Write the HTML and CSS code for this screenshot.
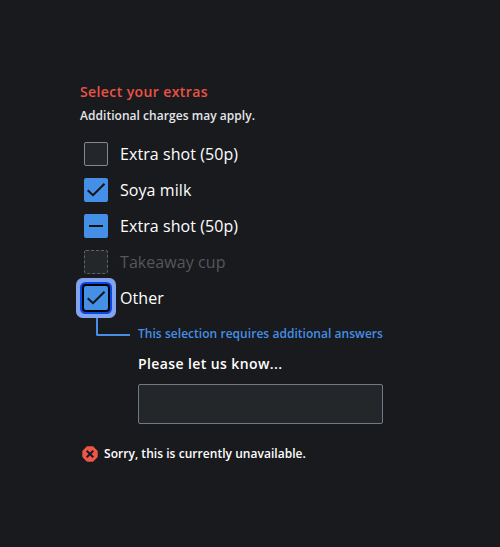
FILE: index.html
```html
<!DOCTYPE html>
<html lang="en">
<head>
<meta charset="utf-8">
<title>Select your extras</title>
<link rel="stylesheet" href="styles.css">
</head>
<body>
<main class="group">
  <h1 class="legend">Select your extras</h1>
  <p class="hint">Additional charges may apply.</p>
  <div class="options">
    <div class="option"><span class="box"></span><span>Extra shot (50p)</span></div>
    <div class="option"><span class="box checked"><svg viewBox="0 0 24 24"><path d="M3.700 12.200l5.300 5L20.500 5.700"/></svg></span><span>Soya milk</span></div>
    <div class="option"><span class="box checked"><svg viewBox="0 0 24 24"><path d="M5 12h14"/></svg></span><span>Extra shot (50p)</span></div>
    <div class="option disabled"><span class="box"><svg viewBox="0 0 24 24"><rect x=".5" y=".5" width="23" height="23" rx="1.5"/></svg></span><span>Takeaway cup</span></div>
    <div class="option"><span class="box checked focused"><svg viewBox="0 0 24 24"><path d="M3.700 12.200l5.300 5L20.500 5.700"/></svg></span><span>Other</span></div>
  </div>
  <div class="extra">
    <span class="connector"></span>
    <div class="answers">
      <p class="note">This selection requires additional answers</p>
      <label class="label" for="details">Please let us know...</label>
      <input class="field" id="details" type="text">
    </div>
  </div>
  <div class="error">
    <svg viewBox="0 0 16 16"><path class="badge" d="M5 .3h6L15.700 5v6L11 15.700H5L.3 11V5z"/><path class="cross" d="M4.700 4.700l6.600 6.600M11.300 4.700l-6.600 6.600"/></svg>
    <span>Sorry, this is currently unavailable.</span>
  </div>
</main>
</body>
</html>
```
FILE: styles.css
```css
* { box-sizing: border-box; }
body {
  margin: 0;
  min-height: 547px;
  background: #191a1d;
  color: #fff;
  font-family: "Open Sans", "Noto Sans", sans-serif;
}
.group { width: 303px; margin-left: 80px; padding-top: 82px; }
.legend, .hint, .note { margin: 0; }
.legend {
  color: #ec5245;
  font-size: 14px;
  font-weight: 600;
  line-height: 20px;
  letter-spacing: .4px;
}
.hint {
  margin-top: 6px;
  color: #e4e6ea;
  font-size: 12px;
  font-weight: 600;
  line-height: 16px;
  letter-spacing: .04px;
}
.options { margin-top: 12px; }
.option {
  display: flex;
  align-items: center;
  gap: 12px;
  height: 36px;
  padding-left: 4px;
  font-size: 16px;
  letter-spacing: .07px;
}
.box {
  width: 24px;
  height: 24px;
  border: 1px solid #838994;
  border-radius: 2px;
  background: #232729;
}
.box svg { display: block; width: 24px; height: 24px; fill: none; stroke: #111315; stroke-width: 2; }
.checked { border: 0; background: #458fe6; }
.focused { box-shadow: 0 0 0 2px #000, 0 0 0 4px #0747e6, 0 0 0 8px #84a3ef; }
.disabled { color: #54575b; }
.disabled .box { border: 0; }
.disabled .box svg { stroke: #5d6164; stroke-width: 1; stroke-dasharray: 3 2; }
.extra { display: flex; margin-top: 2px; padding-left: 16px; }
.connector {
  width: 34px;
  height: 18px;
  margin-right: 8px;
  border-left: 2px solid #458fe6;
  border-bottom: 2px solid #458fe6;
  border-bottom-left-radius: 2px;
}
.answers { width: 245px; padding-top: 8px; }
.note {
  color: #458fe6;
  font-size: 12px;
  font-weight: 600;
  line-height: 16px;
  letter-spacing: .04px;
  white-space: nowrap;
}
.label {
  display: block;
  margin-top: 12px;
  font-size: 14px;
  font-weight: 600;
  line-height: 20px;
  letter-spacing: .4px;
}
.field {
  display: block;
  width: 100%;
  height: 40px;
  margin-top: 10px;
  border: 1px solid #737984;
  border-radius: 2px;
  background: #232729;
}
.error {
  display: flex;
  align-items: center;
  gap: 6px;
  height: 20px;
  margin-top: 20px;
  padding-left: 2px;
  font-size: 12px;
  font-weight: 600;
  line-height: 16px;
  letter-spacing: .04px;
}
.error svg { width: 16px; height: 16px; }
.badge { fill: #ed5749; }
.cross { fill: none; stroke: #191a1d; stroke-width: 2; }
```
